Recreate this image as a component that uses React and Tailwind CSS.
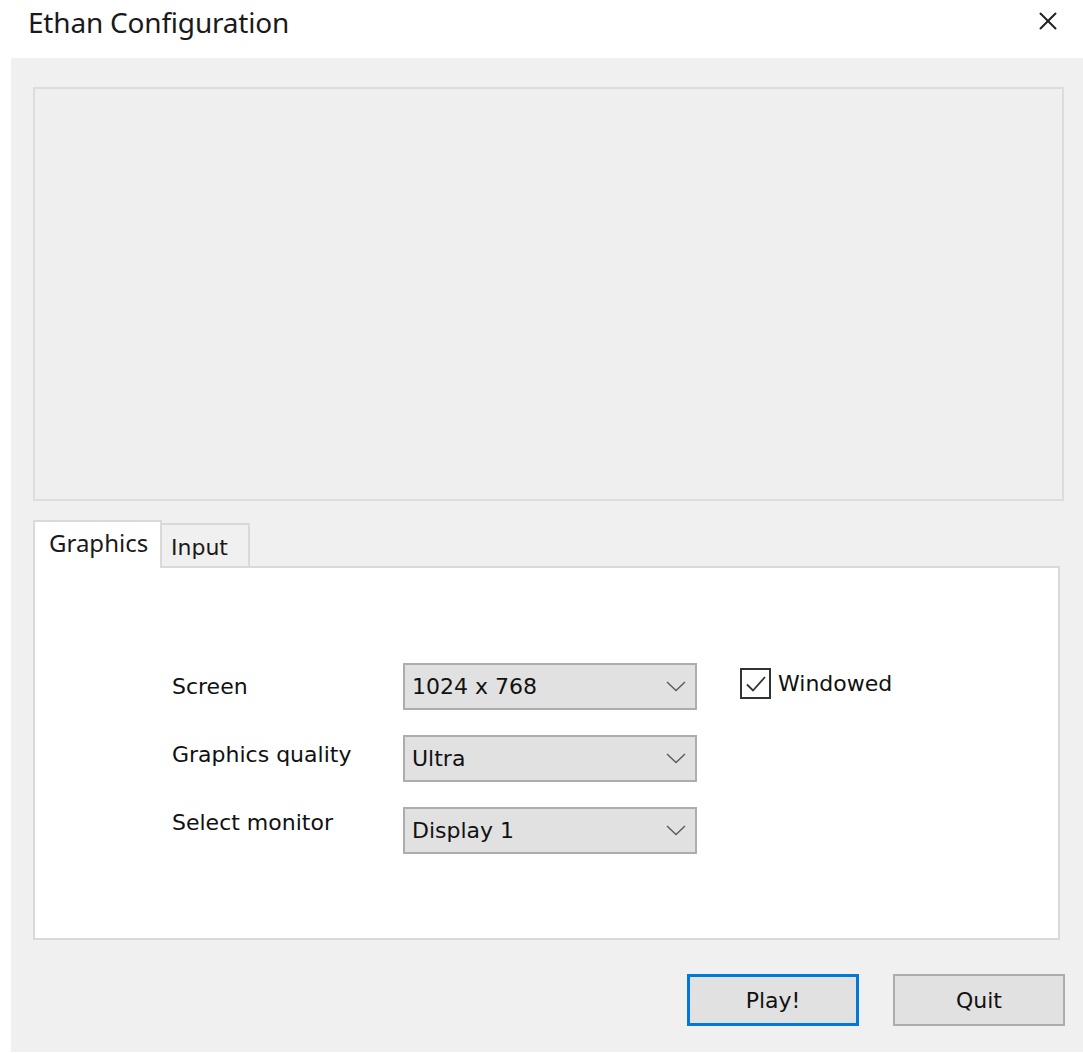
import { X } from "lucide-react";

const ui = { fontFamily: '"DejaVu Sans", Tahoma, sans-serif' };
const segoe = { fontFamily: '"Noto Sans", sans-serif' };

function Chevron() {
  return (
    <svg width="20" height="11" viewBox="0 0 20 11" className="shrink-0">
      <path d="M1 1 L10 9.5 L19 1" fill="none" stroke="#5a5a5a" strokeWidth="1.4" />
    </svg>
  );
}

function Combo({ value }) {
  return (
    <div className="w-[294px] h-[47px] bg-[#e1e1e1] border-2 border-[#adadad] flex items-center justify-between pl-[7px] pr-[9px] text-[22px] text-[#111]">
      <span>{value}</span>
      <Chevron />
    </div>
  );
}

function Row({ label, value, pad, children }) {
  return (
    <div className="flex items-start">
      <div className="w-[231px] text-[22px] leading-[30px] text-[#111]" style={{ paddingTop: pad }}>
        {label}
      </div>
      <Combo value={value} />
      {children}
    </div>
  );
}

export default function App() {
  return (
    <div className="w-[1083px] h-[1053px] bg-white flex flex-col overflow-hidden" style={ui}>
      {/* title bar */}
      <div className="h-[58px] shrink-0 flex items-center justify-between pl-[28px] pr-[20px]">
        <span className="text-[28px] text-[#1a1a1a] tracking-[-0.2px] -mt-[15px]" style={segoe}>
          Ethan Configuration
        </span>
        <X size={30} strokeWidth={1.6} className="text-[#222] -mt-[16px]" />
      </div>

      {/* dialog body */}
      <div className="ml-[11px] h-[994px] bg-[#f0f0f0] pl-[22px] pr-[19px] pt-[29px] flex flex-col">
        <div className="h-[414px] border-2 border-[#dcdcdc] bg-[#efefef]" />

        {/* tabs */}
        <div className="mt-[19px] flex items-end h-[46px]">
          <div
            className="w-[129px] h-[48px] bg-white border-2 border-b-0 border-[#d9d9d9] pl-[14px] pt-[3px] text-[24px] text-[#1a1a1a] relative z-10 -mb-[2px]"
            style={segoe}
          >
            Graphics
          </div>
          <div className="w-[88px] h-[43px] bg-[#f0f0f0] border-2 border-l-0 border-b-0 border-[#d9d9d9] pl-[9px] pt-[6px] text-[22px] text-[#1a1a1a]">
            Input
          </div>
        </div>

        <div className="w-[1027px] h-[374px] bg-white border-2 border-[#d9d9d9] pl-[137px] pt-[95px] flex flex-col gap-[25px]">
          <Row label="Screen" value="1024 x 768" pad={9}>
            <label className="ml-[43px] mt-[4px] flex items-center gap-[7px] text-[22px] text-[#111]">
              <span className="w-[31px] h-[31px] border-2 border-[#333] bg-white flex items-center justify-center">
                <svg width="22" height="18" viewBox="0 0 22 18">
                  <path d="M2 9.5 L8 15.5 L20 2" fill="none" stroke="#333" strokeWidth="1.8" />
                </svg>
              </span>
              Windowed
            </label>
          </Row>
          <Row label="Graphics quality" value="Ultra" pad={5} />
          <Row label="Select monitor" value="Display 1" pad={1} />
        </div>

        {/* buttons */}
        <div className="mt-[34px] flex justify-end gap-[34px] -mr-[1px]">
          <button className="w-[172px] h-[52px] bg-[#e1e1e1] border-[3px] border-[#0078d7] text-[22px] text-[#111]">
            Play!
          </button>
          <button className="w-[172px] h-[52px] bg-[#e1e1e1] border-2 border-[#adadad] text-[22px] text-[#111]">
            Quit
          </button>
        </div>
      </div>
    </div>
  );
}
